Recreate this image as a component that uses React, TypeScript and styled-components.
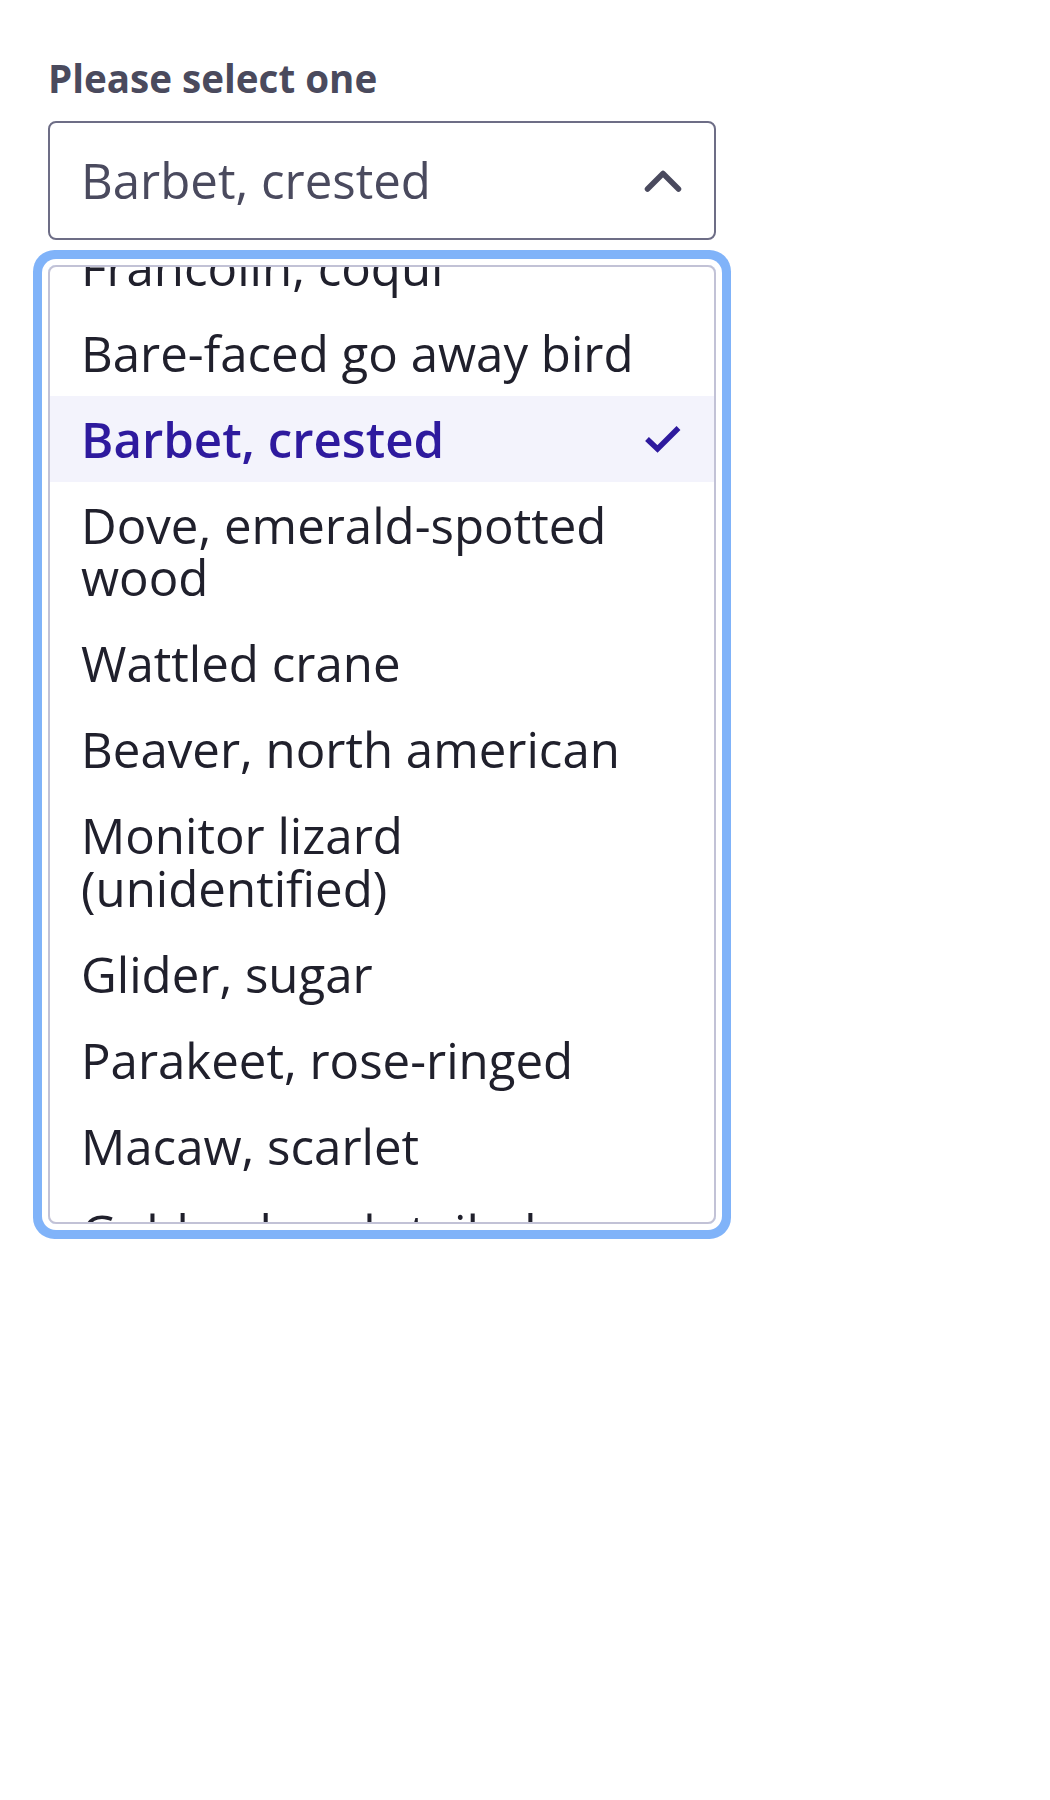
import React, { useLayoutEffect, useRef } from "react";
import styled, { createGlobalStyle } from "styled-components";

const GlobalStyle = createGlobalStyle`
  html, body {
    margin: 0;
    padding: 0;
    background: #ffffff;
  }
  body {
    font-family: "Open Sans", "Noto Sans", Arial, sans-serif;
  }
  * { box-sizing: border-box; }
`;

const Field = styled.div`
  display: flex;
  flex-direction: column;
  width: 668px;
  margin: 0 0 0 48px;
  padding: 55px 0 60px 0;
`;

const Label = styled.label`
  font-size: 38.6px;
  line-height: 46px;
  font-weight: 700;
  color: #4a4a5d;
  margin-bottom: 20px;
`;

const Trigger = styled.button`
  display: flex;
  align-items: center;
  justify-content: space-between;
  height: 119px;
  padding: 0 32px 0 31px;
  border: 2px solid #6d6d86;
  border-radius: 8px;
  background: #ffffff;
  font-family: inherit;
  font-size: 49.2px;
  line-height: 52.8px;
  color: #4a4a5e;
  text-align: left;
  cursor: pointer;
`;

const Listbox = styled.ul`
  list-style: none;
  margin: 25px 0 0 0;
  padding: 0;
  height: 959px;
  overflow-y: auto;
  border: 2px solid #c2c2d6;
  border-radius: 8px;
  box-shadow: 0 0 0 6px #ffffff, 0 0 0 15px #80b3f9;
  scrollbar-width: none;
  &::-webkit-scrollbar { display: none; }
`;

const Option = styled.li<{ $selected?: boolean }>`
  display: grid;
  grid-template-columns: 1fr 38px;
  align-items: center;
  column-gap: 8px;
  padding: 16.6px 32px 16.6px 31px;
  font-size: 49.2px;
  line-height: 52.8px;
  font-weight: ${(p) => (p.$selected ? 600 : 400)};
  color: ${(p) => (p.$selected ? "#2e1a9e" : "#20202c")};
  background: ${(p) => (p.$selected ? "#f3f3fc" : "transparent")};
`;

const CheckSlot = styled.span`
  display: flex;
  align-items: center;
  justify-content: center;
`;

const Chevron = () => (
  <svg width="38" height="24" viewBox="0 0 38 24" aria-hidden="true">
    <polyline
      points="3.5,20 19,4.5 34.5,20"
      fill="none"
      stroke="#4a4a5e"
      strokeWidth="5.5"
      strokeLinecap="round"
      strokeLinejoin="round"
    />
  </svg>
);

const Check = () => (
  <svg width="36" height="29" viewBox="0 0 36 29" aria-hidden="true">
    <polyline
      points="2,15 12.5,25 33.5,4"
      fill="none"
      stroke="#2e1a9e"
      strokeWidth="5.5"
      strokeLinecap="butt"
      strokeLinejoin="miter"
    />
  </svg>
);

const options = [
  "Francolin, coqui",
  "Bare-faced go away bird",
  "Barbet, crested",
  "Dove, emerald-spotted wood",
  "Wattled crane",
  "Beaver, north american",
  "Monitor lizard (unidentified)",
  "Glider, sugar",
  "Parakeet, rose-ringed",
  "Macaw, scarlet",
  "Golden brush-tailed possum",
  "Squirrel, arctic ground",
  "Kangaroo, red",
];

const selected = "Barbet, crested";

export default function App() {
  const listRef = useRef<HTMLUListElement>(null);
  useLayoutEffect(() => {
    if (listRef.current) listRef.current.scrollTop = 43;
  }, []);

  return (
    <>
      <GlobalStyle />
      <Field>
        <Label id="select-label">Please select one</Label>
        <Trigger aria-haspopup="listbox" aria-expanded="true" aria-labelledby="select-label">
          <span>{selected}</span>
          <Chevron />
        </Trigger>
        <Listbox ref={listRef} role="listbox" aria-labelledby="select-label">
          {options.map((o) => (
            <Option key={o} role="option" aria-selected={o === selected} $selected={o === selected}>
              <span>{o}</span>
              <CheckSlot>{o === selected ? <Check /> : null}</CheckSlot>
            </Option>
          ))}
        </Listbox>
      </Field>
    </>
  );
}
